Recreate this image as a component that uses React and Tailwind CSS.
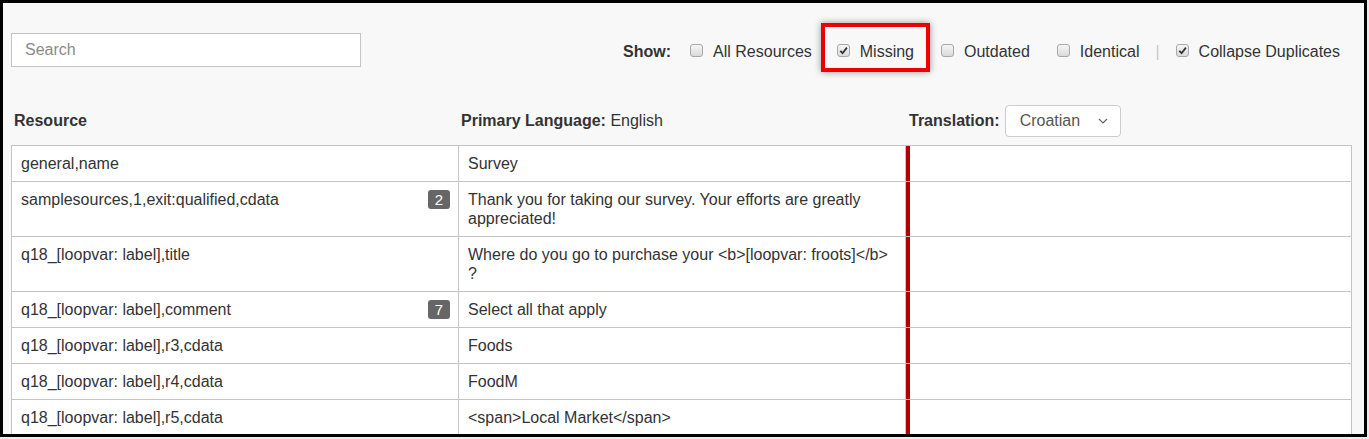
import React from "react";

function Box({ checked }) {
  return (
    <span className="inline-flex w-[13px] h-[13px] shrink-0 items-center justify-center rounded-[3px] border border-[#a8a8a8] bg-linear-to-b from-[#f6f6f6] to-[#dadada] -translate-y-[2px]">
      {checked && (
        <svg width="9" height="9" viewBox="0 0 9 9">
          <path d="M1.3 4.8 L3.6 7.2 L7.9 1.6" fill="none" stroke="#333" strokeWidth="1.8" />
        </svg>
      )}
    </span>
  );
}

function Opt({ checked, label, className = "" }) {
  return (
    <span className={"flex items-center gap-[10px] " + className}>
      <Box checked={checked} />
      <span>{label}</span>
    </span>
  );
}

const rows = [
  { res: "general,name", prim: "Survey" },
  { res: "samplesources,1,exit:qualified,cdata", badge: "2", prim: "Thank you for taking our survey. Your efforts are greatly appreciated!" },
  { res: "q18_[loopvar: label],title", prim: "Where do you go to purchase your <b>[loopvar: froots]</b> ?" },
  { res: "q18_[loopvar: label],comment", badge: "7", prim: "Select all that apply" },
  { res: "q18_[loopvar: label],r3,cdata", prim: "Foods" },
  { res: "q18_[loopvar: label],r4,cdata", prim: "FoodM" },
  { res: "q18_[loopvar: label],r5,cdata", prim: "<span>Local Market</span>" },
];

export default function App() {
  return (
    <div className="w-[1369px] h-[439px] bg-[#ececec] font-['Liberation_Sans',Arial,sans-serif] text-[16px] text-[#333]">
      <div className="w-[1367px] h-[437px] border-[3px] border-black bg-[#f8f8f8] overflow-hidden">
        <div className="pl-[8px] pr-[12px]">
          <div className="mt-[30px] flex items-center h-[34px]">
            <input
              placeholder="Search"
              className="w-[350px] h-[34px] border border-[#c4c4c4] bg-white px-[13px] text-[16px] placeholder:text-[#8a8a8a] outline-none"
            />
            <div className="ml-auto mr-[12px] flex items-center pt-[4px]">
              <span className="font-bold mr-[19px]">Show:</span>
              <Opt label="All Resources" />
              <span className="relative ml-[25px] flex">
                <Opt checked label="Missing" />
                <span className="absolute left-[-16px] right-[-16px] top-[-17px] bottom-[-8px] border-[4px] border-[#ee0000] shadow-[0_0_7px_rgba(0,0,0,0.4)] pointer-events-none" />
              </span>
              <Opt label="Outdated" className="ml-[27px]" />
              <Opt label="Identical" className="ml-[27px]" />
              <span className="mx-[16px] text-[#c8c8c8]">|</span>
              <Opt checked label="Collapse Duplicates" />
            </div>
          </div>

          <div className="mt-[38px] h-[32px] grid grid-cols-[448px_447px_1fr] items-center">
            <div className="pl-[3px] font-bold">Resource</div>
            <div className="pl-[2px]">
              <span className="font-bold">Primary Language:</span> English
            </div>
            <div className="pl-[3px] flex items-center">
              <span className="font-bold">Translation:</span>
              <div className="ml-[5px] w-[116px] h-[32px] flex items-center border border-[#cccccc] rounded-[4px] bg-white pl-[14px] pr-[12px] text-[#555]">
                <span>Croatian</span>
                <svg className="ml-auto" width="10" height="6" viewBox="0 0 10 6">
                  <path d="M1 1 L5 5 L9 1" fill="none" stroke="#666" strokeWidth="1.2" />
                </svg>
              </div>
            </div>
          </div>

          <div className="mt-[8px] border-l border-r border-[#c4c4c4] bg-white">
            {rows.map((r, i) => (
              <div key={i} className="grid grid-cols-[447px_447px_1fr] border-t border-[#c4c4c4] leading-[19px]">
                <div className="border-r border-[#c4c4c4] pl-[9px] pr-[8px] py-[8px] flex items-start justify-between">
                  <span>{r.res}</span>
                  {r.badge && (
                    <span className="w-[22px] h-[19px] rounded-[3px] bg-[#666] text-white text-[15px] leading-[19px] text-center">
                      {r.badge}
                    </span>
                  )}
                </div>
                <div className="border-r border-[#c4c4c4] pl-[9px] pr-[8px] py-[8px]">{r.prim}</div>
                <div className="border-l-[4px] border-[#b00000]" />
              </div>
            ))}
          </div>
        </div>
      </div>
    </div>
  );
}
